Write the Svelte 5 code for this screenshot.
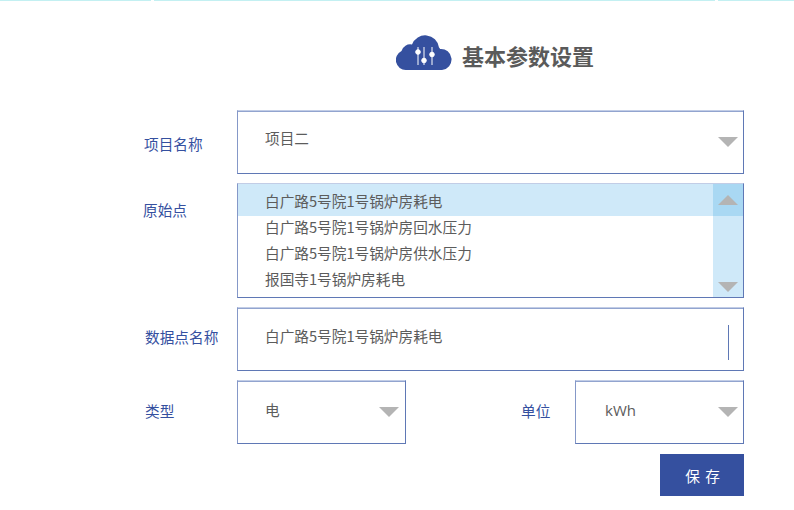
<script>
  const points = [
    '白广路5号院1号锅炉房耗电',
    '白广路5号院1号锅炉房回水压力',
    '白广路5号院1号锅炉房供水压力',
    '报国寺1号锅炉房耗电'
  ];
  let selected = $state(0);
</script>

<div class="strip">
  <span class="seg first"></span>
  <span class="seg mid"></span>
  <span class="seg last"></span>
</div>

<header class="head">
  <svg class="logo" width="56" height="36" viewBox="0 0 56 36" aria-hidden="true">
    <path fill="#35509f" d="M10 36A10 10 0 0 1 5.500 17A9 9 0 0 1 16 10.500A14 14 0 0 1 43 13.500Q44 14 44 15A10.500 10.500 0 0 1 46 36Z"/>
    <g stroke="#fff" stroke-width="1" fill="#fff">
      <path d="M22 13V31M28 13V31M36 13V31" fill="none"/>
      <circle cx="22" cy="18" r="2.300"/>
      <circle cx="28" cy="26.500" r="2.300"/>
      <circle cx="36" cy="20.500" r="2.300"/>
    </g>
  </svg>
  <h1>基本参数设置</h1>
</header>

<form class="form" onsubmit={(e) => e.preventDefault()}>
  <div class="row">
    <span class="label name-label">项目名称</span>
    <div class="box select project">
      <span class="value">项目二</span>
      <span class="arrow down"></span>
    </div>
  </div>

  <div class="row">
    <span class="label list-label">原始点</span>
    <div class="box list">
      <ul>
        {#each points as point, i}
          <li class:active={selected === i}>
            <button type="button" onclick={() => (selected = i)}>{point}</button>
          </li>
        {/each}
      </ul>
      <div class="scrollbar">
        <span class="thumb"><span class="arrow up"></span></span>
        <span class="arrow down"></span>
      </div>
    </div>
  </div>

  <div class="row">
    <span class="label point-label">数据点名称</span>
    <div class="box input">
      <span class="value">白广路5号院1号锅炉房耗电</span>
      <span class="caret"></span>
    </div>
  </div>

  <div class="row split">
    <span class="label type-label">类型</span>
    <div class="box select type-box">
      <span class="value">电</span>
      <span class="arrow down"></span>
    </div>
    <span class="label unit">单位</span>
    <div class="box select">
      <span class="value kwh">kWh</span>
      <span class="arrow down"></span>
    </div>
  </div>

  <div class="actions">
    <button class="save" type="submit">保 存</button>
  </div>
</form>

<style>
  :global(body) {
    margin: 0;
    background: #fff;
    font-family: "Noto Sans CJK SC", "Open Sans", sans-serif;
  }

  .strip {
    display: flex;
    gap: 3px;
    height: 1px;
  }

  .seg {
    background: #c3f0f2;
  }

  .first { width: 151px; }
  .mid { width: 561px; }
  .last { flex: 1; }

  .head {
    display: flex;
    align-items: center;
    gap: 10px;
    height: 38px;
    margin: 32px 0 0 396px;
  }

  .logo {
    flex: none;
  }

  h1 {
    margin: 0;
    padding-top: 6px;
    font-size: 22px;
    font-weight: 700;
    color: #5a5a5a;
    line-height: 32px;
  }

  .form {
    display: flex;
    flex-direction: column;
    gap: 9px;
    width: 744px;
    margin-top: 39px;
  }

  .row {
    display: grid;
    grid-template-columns: 237px 1fr;
    align-items: center;
  }

  .row.split {
    grid-template-columns: 237px 169px 1fr 169px;
  }

  .label {
    padding-left: 144px;
    font-size: 14.67px;
    color: #35509f;
    line-height: 20px;
  }

  .name-label {
    padding-top: 4px;
  }

  .list-label {
    align-self: start;
    padding-top: 17px;
    padding-left: 143px;
  }

  .point-label {
    padding-left: 145px;
    padding-bottom: 4px;
  }

  .type-label {
    padding-left: 145px;
    padding-bottom: 2px;
  }

  .unit {
    padding-left: 115px;
    padding-bottom: 2px;
  }

  .box {
    position: relative;
    box-sizing: border-box;
    border: 1px solid #5f78b5;
    border-top-color: #c2cde6;
    border-left-color: #8598c8;
    box-shadow: inset 0 1px #92a4cf;
    background: #fff;
    font-size: 14.67px;
    color: #5c5c5c;
  }

  .select,
  .input {
    display: flex;
    align-items: flex-start;
    height: 64px;
    padding: 18px 0 0 27px;
  }

  .project {
    padding-top: 16px;
  }

  .input {
    padding-top: 17px;
  }

  .value {
    line-height: 22px;
  }

  .kwh {
    margin-left: 2px;
    font-family: "Open Sans", sans-serif;
    font-size: 15px;
  }

  .arrow {
    display: block;
    width: 0;
    height: 0;
    border-left: 10px solid transparent;
    border-right: 10px solid transparent;
  }

  .arrow.down {
    border-top: 10px solid #b4b4b4;
  }

  .arrow.up {
    border-bottom: 10px solid #b4b4b4;
  }

  .select > .arrow {
    position: absolute;
    right: 5px;
    top: 26px;
  }

  .type-box > .arrow {
    right: 6px;
  }

  .caret {
    position: absolute;
    right: 14px;
    top: 17px;
    width: 1px;
    height: 35px;
    background: #5f78b5;
  }

  .list {
    display: flex;
    height: 115px;
  }

  ul {
    flex: 1;
    margin: 0;
    padding: 0;
    list-style: none;
  }

  li {
    height: 26px;
  }

  li:first-child {
    height: 32px;
  }

  li button {
    display: block;
    width: 100%;
    height: 100%;
    padding: 0 0 4px 27px;
    border: 0;
    background: none;
    font: inherit;
    color: inherit;
    line-height: 22px;
    text-align: left;
  }

  li:first-child button {
    padding: 2px 0 0 27px;
  }

  li.active {
    background: #cfe9f9;
  }

  .scrollbar {
    display: flex;
    flex-direction: column;
    align-items: center;
    justify-content: space-between;
    flex: none;
    width: 30px;
    padding-bottom: 5px;
    box-sizing: border-box;
    background: #cfe9f9;
  }

  .thumb {
    display: flex;
    justify-content: center;
    align-items: center;
    width: 100%;
    height: 32px;
    background: #a9d8f3;
  }

  .actions {
    display: flex;
    justify-content: flex-end;
    margin-top: 1px;
  }

  .save {
    width: 84px;
    height: 42px;
    padding: 0 0 0 2px;
    border: 0;
    background: #35509f;
    color: #fff;
    font: inherit;
    font-size: 14.67px;
    letter-spacing: 1px;
  }
</style>
